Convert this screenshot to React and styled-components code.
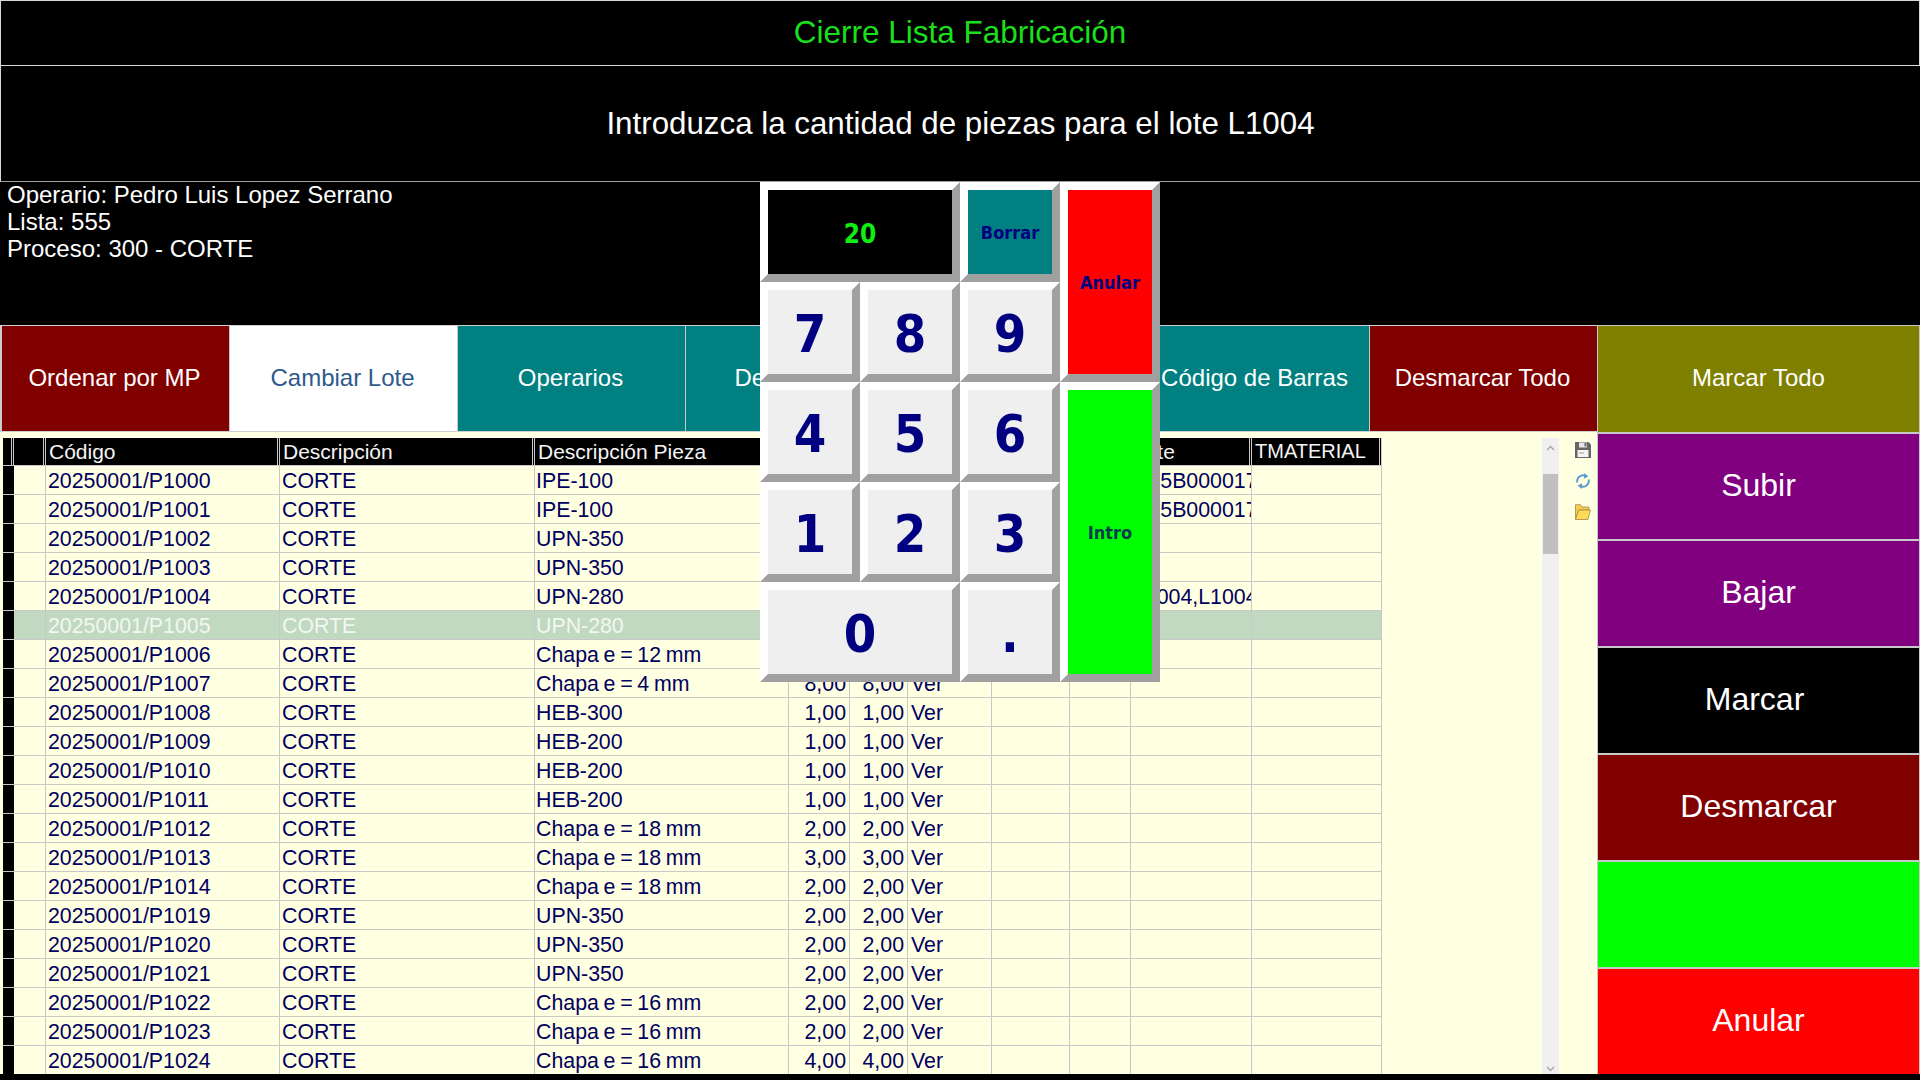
import React from "react";
import styled, { createGlobalStyle } from "styled-components";

const GlobalStyle = createGlobalStyle`
  html, body {
    margin: 0;
    padding: 0;
    background: #000;
  }
  * {
    box-sizing: border-box;
  }
`;

const Page = styled.div`
  position: relative;
  width: 1920px;
  height: 1080px;
  overflow: hidden;
  background: #000;
  font-family: "Liberation Sans", Arial, sans-serif;
  display: flex;
  flex-direction: column;
`;

const TitleBar = styled.div`
  flex: none;
  height: 66px;
  padding-bottom: 2px;
  border: 1px solid #d8d8d8;
  display: flex;
  align-items: center;
  justify-content: center;
  color: #1adf1a;
  font-size: 31.5px;
`;

const Prompt = styled.div`
  flex: none;
  height: 116px;
  border-left: 1px solid #d8d8d8;
  border-bottom: 1px solid #a0a0a0;
  display: flex;
  align-items: center;
  justify-content: center;
  color: #fff;
  font-size: 31.3px;
`;

const Info = styled.div`
  flex: none;
  height: 144px;
  margin-top: -1px;
  padding: 0 7px;
  color: #fff;
  font-size: 24px;
  line-height: 27px;
`;

const Body = styled.div`
  flex: none;
  display: flex;
  overflow: hidden;
  background: #ffffe2;
  height: 749px;
`;

const LeftPane = styled.div`
  width: 1597px;
  display: flex;
  flex-direction: column;
`;

const Tabs = styled.div`
  flex: none;
  height: 107px;
  display: flex;
  padding-left: 1px;
  background: #d0d0d0;
  border-top: 1px solid #d0d0d0;
  border-bottom: 1px solid #d0d0d0;
`;

const Tab = styled.div`
  width: 228px;
  display: flex;
  align-items: center;
  justify-content: center;
  padding: 0 2px 2px 0;
  font-size: 24px;
  border-left: 1px solid #c8c8c8;
  color: ${(p) => p.$color || "#fff"};
  background: ${(p) => p.$bg};
`;

const TableArea = styled.div`
  flex: 1;
  display: flex;
  padding: 6px 0 0 3px;
`;

const TableWrap = styled.div`
  width: 1539px;
  height: 636px;
  overflow: hidden;
`;

const Grid = styled.table`
  width: 1379px;
  table-layout: fixed;
  border-collapse: separate;
  border-spacing: 0;
  font-size: 21.33px;
  word-spacing: -1.2px;
`;

const HeadCell = styled.th`
  height: 28px;
  padding: 0 3px;
  background: #000;
  color: #f4f4f4;
  font-weight: normal;
  font-size: ${(p) => p.$size || 21}px;
  word-spacing: 0;
  text-align: left;
  white-space: nowrap;
  overflow: hidden;
  border-right: 3px double #c8c8c8;
  border-bottom: 1px solid #c8c8c8;
`;

const Cell = styled.td`
  height: 29px;
  padding: 2px 3px 0 ${(p) => p.$pad ?? 2}px;
  white-space: nowrap;
  overflow: hidden;
  color: ${(p) => (p.$selected ? "#f2f7f0" : "#000060")};
  background: ${(p) => (p.$selected ? "#c1d9c1" : "transparent")};
  text-align: ${(p) => (p.$right ? "right" : "left")};
  border-right: 1px solid #c8c8c8;
  border-bottom: 1px solid #c8c8c8;
`;

const Marker = styled.td`
  height: 29px;
  padding: 0;
  background: #000;
  border-bottom: 1px solid #c8c8c8;
`;

const Scrollbar = styled.div`
  width: 17px;
  height: 636px;
  background: #f0f0f0;
  display: flex;
  flex-direction: column;
  align-items: center;
  color: #a8a8a8;
`;

const ScrollArrow = styled.div`
  height: 36px;
  display: flex;
  align-items: ${(p) => (p.$down ? "flex-end" : "flex-start")};
  padding: 7px 0 2px;
`;

const ScrollThumb = styled.div`
  width: 15px;
  height: 80px;
  background: #c0c0c0;
`;

const ScrollRest = styled.div`
  flex: 1;
`;

const IconColumn = styled.div`
  width: 38px;
  display: flex;
  flex-direction: column;
  align-items: center;
  gap: 15px;
  padding: 4px 0 0 10px;
`;

const RightPane = styled.div`
  width: 323px;
  display: flex;
  flex-direction: column;
  padding-top: 1px;
  background: #c8c8c8;
`;

const SideButton = styled.div`
  flex: none;
  height: 107px;
  display: flex;
  align-items: center;
  justify-content: center;
  padding: 0 ${(p) => p.$nudge || 0}px 2px 0;
  color: #fff;
  font-size: ${(p) => p.$size || 32}px;
  background: ${(p) => p.$bg};
  border: 1px solid #c8c8c8;
  border-top-width: ${(p) => (p.$first ? 0 : 1)}px;
`;

const Keypad = styled.div`
  position: absolute;
  left: 760px;
  top: 182px;
  width: 400px;
  height: 500px;
  display: grid;
  grid-template-columns: repeat(4, 100px);
  grid-template-rows: repeat(5, 100px);
`;

const Key = styled.div`
  grid-column: ${(p) => p.$col || "auto"};
  grid-row: ${(p) => p.$row || "auto"};
  display: flex;
  align-items: center;
  justify-content: center;
  padding-top: ${(p) => p.$drop ?? 3}px;
  border: 8px solid;
  border-color: #fff #a0a0a0 #a0a0a0 #fff;
  background: ${(p) => p.$bg || "#efefef"};
  color: ${(p) => p.$color || "#000080"};
  font-family: "DejaVu Sans Condensed", "DejaVu Sans", sans-serif;
  font-stretch: condensed;
  font-weight: bold;
  font-size: ${(p) => p.$size || 52}px;
`;

const SaveIcon = () => (
  <svg width="16" height="16" viewBox="0 0 16 16">
    <path d="M0 0h13.5L16 2.5V16H0z" fill="#666" />
    <rect x="4" y="0.5" width="8" height="5" fill="#e8e8e8" />
    <rect x="9.5" y="1" width="2" height="3.5" fill="#666" />
    <rect x="2.5" y="8" width="11" height="7" fill="#f4f4f4" />
    <rect x="4" y="10.5" width="5" height="1" fill="#999" />
  </svg>
);

const SyncIcon = () => (
  <svg width="16" height="16" viewBox="0 0 16 16" fill="none">
    <path d="M2.3 9.5A6 6 0 0 1 11.8 3.5" stroke="#5b9bd0" strokeWidth="1.9" />
    <path d="M13.7 6.5A6 6 0 0 1 4.2 12.5" stroke="#5b9bd0" strokeWidth="1.9" />
    <path d="M9.3 0l4 3.6-4.4 2.2z" fill="#5b9bd0" />
    <path d="M6.7 16l-4-3.6 4.4-2.2z" fill="#5b9bd0" />
  </svg>
);

const FolderIcon = () => (
  <svg width="16" height="16" viewBox="0 0 16 16">
    <path d="M.5 15.5V.7h5l1.5 2.3h7v3H4z" fill="#f6d04d" stroke="#a08a4a" strokeWidth=".8" />
    <path d="M.5 15.5L3.6 6h11.9l-2.6 9.5z" fill="#ffdb55" stroke="#a08a4a" strokeWidth=".8" />
  </svg>
);

const Chevron = ({ down }) => (
  <svg width="9" height="6" viewBox="0 0 9 6" fill="none">
    <path d={down ? "M1 1l3.5 3.5L8 1" : "M1 5l3.5-3.5L8 5"} stroke="currentColor" strokeWidth="1.4" />
  </svg>
);

const columns = [11, 32, 234, 255, 254, 61, 58, 84, 78, 61, 121, 130];
const headers = ["", "", "Código", "Descripción", "Descripción Pieza", "Cant.", "Pzas.", "Plano", "", "", "Lote", "TMATERIAL"];

const rows = [
  ["P1000", "IPE-100", "1,00", "C25B000017"],
  ["P1001", "IPE-100", "1,00", "C25B000017"],
  ["P1002", "UPN-350", "2,00", ""],
  ["P1003", "UPN-350", "2,00", ""],
  ["P1004", "UPN-280", "2,00", "L1004,L1004"],
  ["P1005", "UPN-280", "2,00", ""],
  ["P1006", "Chapa e = 12 mm", "4,00", ""],
  ["P1007", "Chapa e = 4 mm", "8,00", ""],
  ["P1008", "HEB-300", "1,00", ""],
  ["P1009", "HEB-200", "1,00", ""],
  ["P1010", "HEB-200", "1,00", ""],
  ["P1011", "HEB-200", "1,00", ""],
  ["P1012", "Chapa e = 18 mm", "2,00", ""],
  ["P1013", "Chapa e = 18 mm", "3,00", ""],
  ["P1014", "Chapa e = 18 mm", "2,00", ""],
  ["P1019", "UPN-350", "2,00", ""],
  ["P1020", "UPN-350", "2,00", ""],
  ["P1021", "UPN-350", "2,00", ""],
  ["P1022", "Chapa e = 16 mm", "2,00", ""],
  ["P1023", "Chapa e = 16 mm", "2,00", ""],
  ["P1024", "Chapa e = 16 mm", "4,00", ""],
];

const tabs = [
  { label: "Ordenar por MP", bg: "#800000" },
  { label: "Cambiar Lote", bg: "#fff", color: "#2e5a8c" },
  { label: "Operarios", bg: "#008080" },
  { label: "Detalle Lote", bg: "#008080" },
  { label: "", bg: "#008080" },
  { label: "Código de Barras", bg: "#008080" },
  { label: "Desmarcar Todo", bg: "#800000" },
];

const sideButtons = [
  { label: "Marcar Todo", bg: "#808000", size: 24 },
  { label: "Subir", bg: "#800080" },
  { label: "Bajar", bg: "#800080" },
  { label: "Marcar", bg: "#000", nudge: 8 },
  { label: "Desmarcar", bg: "#800000" },
  { label: "", bg: "#00ff00" },
  { label: "Anular", bg: "#ff0000" },
];

export default function App() {
  return (
    <Page>
      <GlobalStyle />
      <TitleBar>Cierre Lista Fabricación</TitleBar>
      <Prompt>Introduzca la cantidad de piezas para el lote L1004</Prompt>
      <Info>
        <div>Operario: Pedro Luis Lopez Serrano</div>
        <div>Lista: 555</div>
        <div>Proceso: 300 - CORTE</div>
      </Info>
      <Body>
        <LeftPane>
          <Tabs>
            {tabs.map((t, i) => (
              <Tab key={i} $bg={t.bg} $color={t.color}>
                {t.label}
              </Tab>
            ))}
          </Tabs>
          <TableArea>
            <TableWrap>
              <Grid>
                <colgroup>
                  {columns.map((w, i) => (
                    <col key={i} style={{ width: w }} />
                  ))}
                </colgroup>
                <thead>
                  <tr>
                    {headers.map((h, i) => (
                      <HeadCell key={i} $size={h === "TMATERIAL" ? 20 : undefined}>{h}</HeadCell>
                    ))}
                  </tr>
                </thead>
                <tbody>
                  {rows.map((r) => {
                    const selected = r[0] === "P1005";
                    return (
                      <tr key={r[0]}>
                        <Marker />
                        <Cell $selected={selected} />
                        <Cell $selected={selected}>20250001/{r[0]}</Cell>
                        <Cell $selected={selected}>CORTE</Cell>
                        <Cell $selected={selected} $pad={1}>{r[1]}</Cell>
                        <Cell $selected={selected} $right>{r[2]}</Cell>
                        <Cell $selected={selected} $right>{r[2]}</Cell>
                        <Cell $selected={selected} $pad={3}>Ver</Cell>
                        <Cell $selected={selected} />
                        <Cell $selected={selected} />
                        <Cell $selected={selected}>{r[3]}</Cell>
                        <Cell $selected={selected} />
                      </tr>
                    );
                  })}
                </tbody>
              </Grid>
            </TableWrap>
            <Scrollbar>
              <ScrollArrow>
                <Chevron />
              </ScrollArrow>
              <ScrollThumb />
              <ScrollRest />
              <ScrollArrow $down>
                <Chevron down />
              </ScrollArrow>
            </Scrollbar>
            <IconColumn>
              <SaveIcon />
              <SyncIcon />
              <FolderIcon />
            </IconColumn>
          </TableArea>
        </LeftPane>
        <RightPane>
          {sideButtons.map((b, i) => (
            <SideButton key={i} $bg={b.bg} $size={b.size} $nudge={b.nudge} $first={i === 0}>
              {b.label}
            </SideButton>
          ))}
        </RightPane>
      </Body>
      <Keypad>
        <Key $col="span 2" $bg="#000" $color="#11ee11" $size={26}>20</Key>
        <Key $bg="#008080" $size={18} $drop={0}>Borrar</Key>
        <Key $row="span 2" $bg="#ff0000" $size={18} $drop={0}>Anular</Key>
        <Key>7</Key>
        <Key>8</Key>
        <Key>9</Key>
        <Key $col="4" $row="3 / span 3" $bg="#00ff00" $color="#003c50" $size={18} $drop={0}>Intro</Key>
        <Key>4</Key>
        <Key>5</Key>
        <Key>6</Key>
        <Key>1</Key>
        <Key>2</Key>
        <Key>3</Key>
        <Key $col="span 2">0</Key>
        <Key>.</Key>
      </Keypad>
    </Page>
  );
}
